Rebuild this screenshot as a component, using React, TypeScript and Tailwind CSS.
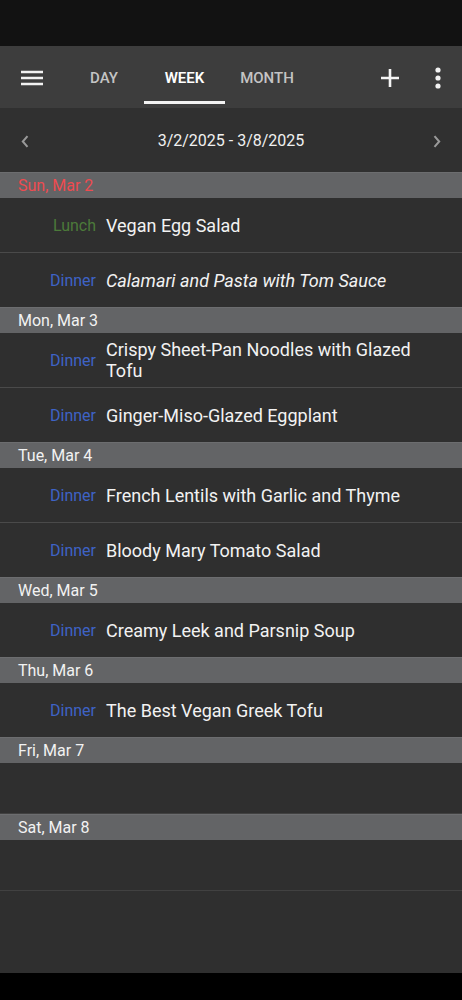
import React from "react";

/* ===================== DATA ===================== */

type Meal = { kind: "Lunch" | "Dinner"; title: string; italic?: boolean };
type Day = { label: string; today?: boolean; meals: Meal[] };

const days: Day[] = [
  {
    label: "Sun, Mar 2",
    today: true,
    meals: [
      { kind: "Lunch", title: "Vegan Egg Salad" },
      { kind: "Dinner", title: "Calamari and Pasta with Tom Sauce", italic: true },
    ],
  },
  {
    label: "Mon, Mar 3",
    meals: [
      { kind: "Dinner", title: "Crispy Sheet-Pan Noodles with Glazed Tofu" },
      { kind: "Dinner", title: "Ginger-Miso-Glazed Eggplant" },
    ],
  },
  {
    label: "Tue, Mar 4",
    meals: [
      { kind: "Dinner", title: "French Lentils with Garlic and Thyme" },
      { kind: "Dinner", title: "Bloody Mary Tomato Salad" },
    ],
  },
  {
    label: "Wed, Mar 5",
    meals: [{ kind: "Dinner", title: "Creamy Leek and Parsnip Soup" }],
  },
  {
    label: "Thu, Mar 6",
    meals: [{ kind: "Dinner", title: "The Best Vegan Greek Tofu" }],
  },
  { label: "Fri, Mar 7", meals: [] },
  { label: "Sat, Mar 8", meals: [] },
];

/* ===================== ICONS ===================== */

function MenuIcon() {
  return (
    <svg width="22" height="16" viewBox="0 0 22 16" fill="none">
      <path d="M0 2h22M0 8h22M0 14h22" stroke="#f2f2f2" strokeWidth="2.4" />
    </svg>
  );
}

function PlusIcon() {
  return (
    <svg width="20" height="20" viewBox="0 0 20 20" fill="none">
      <path d="M10 1v18M1 10h18" stroke="#f5f5f5" strokeWidth="2.6" />
    </svg>
  );
}

function DotsIcon() {
  return (
    <svg width="6" height="22" viewBox="0 0 6 22" fill="#f2f2f2">
      <circle cx="3" cy="3" r="2.6" />
      <circle cx="3" cy="11" r="2.6" />
      <circle cx="3" cy="19" r="2.6" />
    </svg>
  );
}

function Chevron({ dir }: { dir: "left" | "right" }) {
  return (
    <svg width="8" height="13" viewBox="0 0 8 13" fill="none">
      <path
        d={dir === "left" ? "M6.5 1.2 1.8 6.5l4.7 5.3" : "M1.5 1.2l4.7 5.3-4.7 5.3"}
        stroke="#9a9a9a"
        strokeWidth="2"
      />
    </svg>
  );
}

/* ===================== COMPONENT ===================== */

export default function App() {
  return (
    <div
      className="w-[462px] h-[1000px] flex flex-col bg-black overflow-hidden"
      style={{ fontFamily: "Roboto, 'Noto Sans', sans-serif" }}
    >
      {/* status bar */}
      <div className="h-[46px] bg-[#121212] shrink-0" />

      {/* toolbar */}
      <header className="h-[62px] bg-[#3d3d3d] flex items-center shrink-0">
        <div className="w-[64px] pl-[21px] pt-[1px] flex items-center">
          <MenuIcon />
        </div>
        <nav className="flex h-full pt-[2px]">
          <div className="w-[80px] flex items-center justify-center text-[15px] font-medium text-[#c4c4c4]">
            DAY
          </div>
          <div className="w-[81px] flex flex-col items-center justify-center relative text-[15px] font-semibold text-white">
            WEEK
            <span className="absolute bottom-[4px] left-0 right-0 h-[3px] bg-[#f2f2f2]" />
          </div>
          <div className="w-[84px] flex items-center justify-center text-[15px] font-medium text-[#c4c4c4]">
            MONTH
          </div>
        </nav>
        <div className="ml-auto flex items-center gap-[35px] pr-[21px] pt-[1px]">
          <PlusIcon />
          <DotsIcon />
        </div>
      </header>

      {/* week navigation */}
      <div className="h-[64px] bg-[#303030] flex items-center justify-between px-[21px] pt-[2px] shrink-0">
        <Chevron dir="left" />
        <span className="text-[16px] text-[#f0f0f0]">3/2/2025 - 3/8/2025</span>
        <Chevron dir="right" />
      </div>

      {/* agenda */}
      <main className="flex-1 bg-[#2f2f2f] flex flex-col">
        {days.map((day) => (
          <section key={day.label}>
            <div
              className={`h-[26px] bg-[#636466] border-t border-[#6c6d6f] flex items-center pl-[18px] pt-[1px] text-[16px] ${
                day.today ? "text-[#ee4b50]" : "text-[#f2f2f2]"
              }`}
            >
              {day.label}
            </div>
            {day.meals.length === 0 ? (
              <div className="h-[51px] border-b border-[#414141]" />
            ) : (
              day.meals.map((meal, i) => (
                <div
                  key={i}
                  className={`flex items-center ${
                    i < day.meals.length - 1
                      ? "h-[55px] border-b border-[#4a4a4a]"
                      : "h-[54px]"
                  }`}
                >
                  <span
                    className={`w-[96px] shrink-0 text-right text-[16px] pt-[2px] ${
                      meal.kind === "Lunch" ? "text-[#4c7a3a]" : "text-[#3e63c6]"
                    }`}
                  >
                    {meal.kind}
                  </span>
                  <span
                    className={`pl-[10px] pr-[40px] text-[18px] leading-[21px] text-[#f2f2f2] ${
                      meal.italic ? "italic" : ""
                    }`}
                  >
                    {meal.title}
                  </span>
                </div>
              ))
            )}
          </section>
        ))}
      </main>

      {/* nav bar area */}
      <div className="h-[27px] bg-black shrink-0" />
    </div>
  );
}
